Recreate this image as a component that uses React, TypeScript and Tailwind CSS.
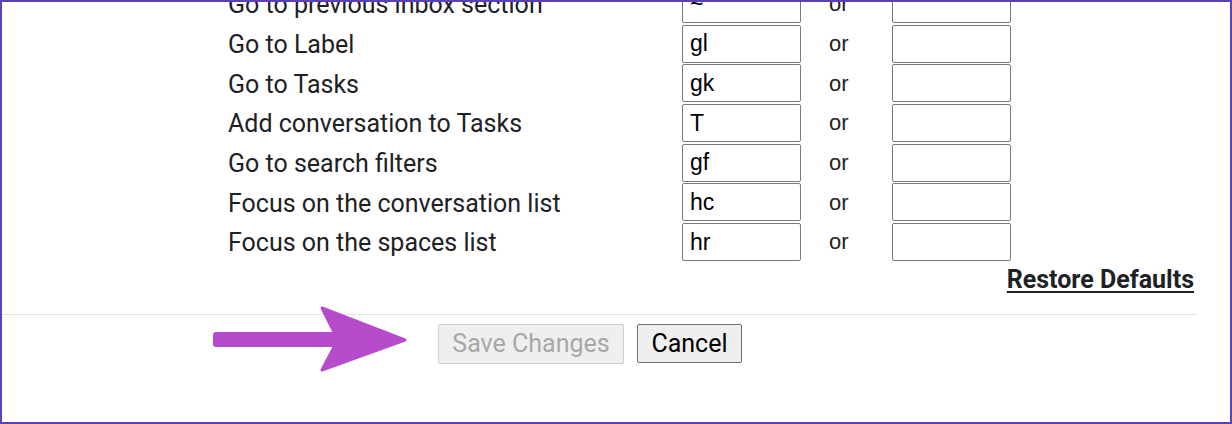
import React from 'react';

const SHORTCUTS = [
  { label: 'Go to previous inbox section', key: '~' },
  { label: 'Go to Label', key: 'gl' },
  { label: 'Go to Tasks', key: 'gk' },
  { label: 'Add conversation to Tasks', key: 'T' },
  { label: 'Go to search filters', key: 'gf' },
  { label: 'Focus on the conversation list', key: 'hc' },
  { label: 'Focus on the spaces list', key: 'hr' },
];

const Arrow = () => (
  <svg
    className="absolute left-[209px] top-[304px]"
    width="200"
    height="70"
    viewBox="0 0 200 70"
  >
    <rect x="4" y="28" width="124" height="15" rx="3" fill="#b64bcb" />
    <polygon
      points="113,4 196,36 113,66 125,43 125,28"
      fill="#b64bcb"
      stroke="#b64bcb"
      strokeWidth="3"
      strokeLinejoin="round"
    />
  </svg>
);

export default function App() {
  return (
    <div className="relative w-[1232px] h-[424px] overflow-hidden bg-white">
      <div className="-mt-[16px]">
        {SHORTCUTS.map((row) => (
          <div key={row.label} className="flex items-center h-[39.7px]">
            <div className="w-[454px] ml-[228px] pt-[3px] text-[25px] leading-[30px] text-[#202124] font-['Roboto',sans-serif] whitespace-nowrap">
              {row.label}
            </div>
            <div className="w-[119px] h-[38px] border border-[#7a7a7a] rounded-[2px] flex items-center pl-[7px] text-[23px] text-black font-['Liberation_Sans',Arial,sans-serif]">
              {row.key}
            </div>
            <div className="w-[91px] pl-[28px] text-[22px] text-[#222] font-['Liberation_Sans',Arial,sans-serif]">
              or
            </div>
            <div className="w-[119px] h-[38px] border border-[#7a7a7a] rounded-[2px]" />
          </div>
        ))}
      </div>

      <div className="flex justify-end pr-[38px] mt-[3px]">
        <a className="text-[25px] leading-[30px] font-bold underline underline-offset-[3px] decoration-2 text-[#202124] font-['Roboto',sans-serif] cursor-pointer">
          Restore Defaults
        </a>
      </div>

      <div className="mt-[19px] mr-[35px] border-t border-[#e3e3e3]" />

      <div className="flex gap-[13px] ml-[438px] mt-[9px]">
        <button
          disabled
          className="w-[186px] h-[40px] bg-[#efefef] border border-[#cfcfcf] rounded-[2px] text-[25px] text-[#a8a8a8] font-['Roboto',sans-serif]"
        >
          Save Changes
        </button>
        <button className="w-[105px] h-[39px] bg-[#efefef] border border-[#6f6f6f] rounded-[2px] text-[25px] text-black font-['Roboto',sans-serif]">
          Cancel
        </button>
      </div>

      <Arrow />

      <div className="pointer-events-none absolute inset-0 border-2 border-[#5b3fbb]" />
    </div>
  );
}
